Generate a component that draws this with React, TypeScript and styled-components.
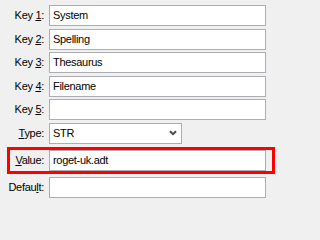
import React from 'react';
import styled, { createGlobalStyle } from 'styled-components';

const GlobalStyle = createGlobalStyle`
  html, body {
    margin: 0;
    padding: 0;
    background: #f0f0f0;
  }
  body {
    font-family: 'Liberation Sans', Arial, sans-serif;
    font-size: 11px;
    letter-spacing: -0.3px;
    color: #000;
  }
`;

const Form = styled.div`
  display: flex;
  flex-direction: column;
  gap: 2.5px;
  padding-top: 5px;
  width: 271px;
  height: 202px;
  box-sizing: border-box;
`;

const Row = styled.div<{ $highlight?: boolean }>`
  position: relative;
  display: grid;
  grid-template-columns: 44px 217px;
  column-gap: 5px;
  align-items: center;
  height: 21px;
  margin: ${(p) => (p.$highlight ? '4px 0 3px' : '0')};

  ${(p) =>
    p.$highlight &&
    `
    &::after {
      content: '';
      position: absolute;
      left: 7px;
      right: -4px;
      top: -3px;
      bottom: -3px;
      border: 3px solid #ff0000;
      pointer-events: none;
    }
  `}
`;

const Label = styled.label`
  text-align: right;
  white-space: nowrap;
  line-height: 21px;
  color: #000;

  u {
    text-underline-offset: 1px;
  }
`;

const Field = styled.div`
  box-sizing: border-box;
  height: 21px;
  border: 1px solid #abadb3;
  background: #fff;
  padding: 0 3px;
  line-height: 19px;
  color: #000;
  white-space: nowrap;
  overflow: hidden;
`;

const Select = styled(Field)`
  width: 133px;
  display: flex;
  align-items: center;
  justify-content: space-between;
  padding-right: 4px;

  svg {
    display: block;
  }
`;

const Chevron = () => (
  <svg width="8" height="6" viewBox="0 0 8 6">
    <polyline points="1,1.2 4,4.2 7,1.2" fill="none" stroke="#4a4a4a" strokeWidth="2" />
  </svg>
);

const keys = ['System', 'Spelling', 'Thesaurus', 'Filename', ''];

const App: React.FC = () => {
  return (
    <>
      <GlobalStyle />
      <Form>
        {keys.map((value, i) => (
          <Row key={i}>
            <Label>
              Key <u>{i + 1}</u>:
            </Label>
            <Field>{value}</Field>
          </Row>
        ))}
        <Row>
          <Label>
            <u>T</u>ype:
          </Label>
          <Select>
            <span>STR</span>
            <Chevron />
          </Select>
        </Row>
        <Row $highlight>
          <Label>
            <u>V</u>alue:
          </Label>
          <Field>roget-uk.adt</Field>
        </Row>
        <Row>
          <Label>
            Defau<u>l</u>t:
          </Label>
          <Field />
        </Row>
      </Form>
    </>
  );
};

export default App;
